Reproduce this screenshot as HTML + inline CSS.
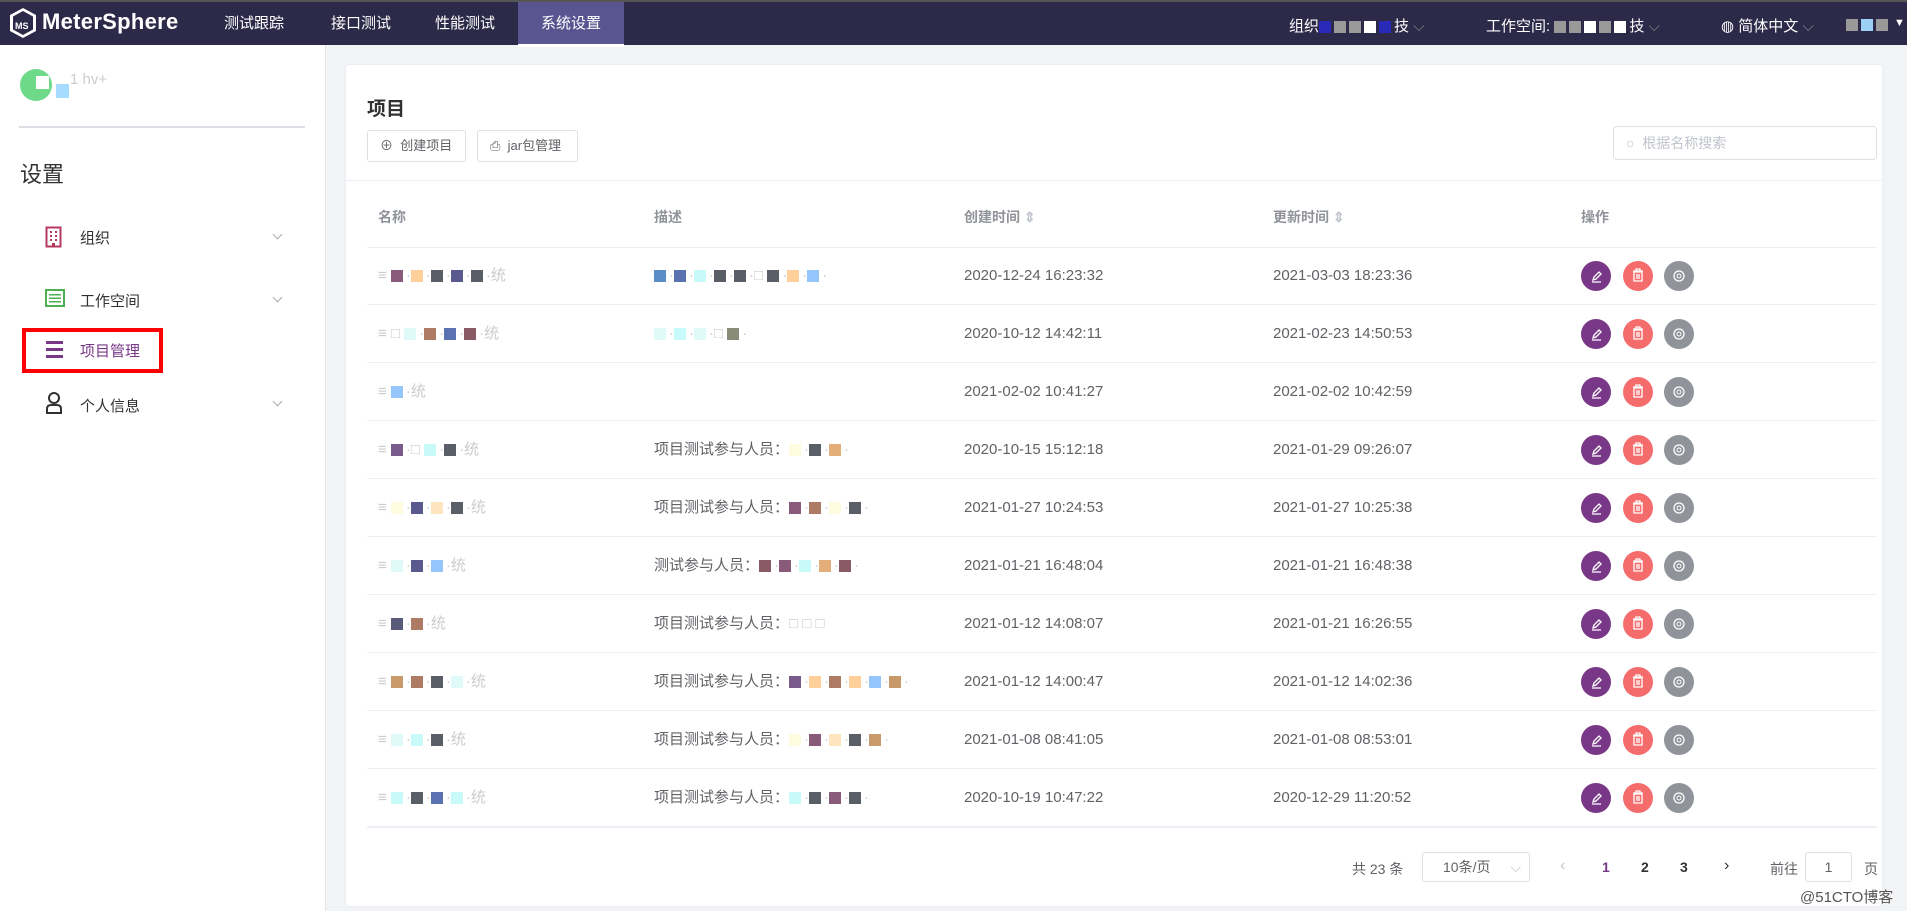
<!DOCTYPE html>
<html><head><meta charset="utf-8"><style>
*{margin:0;padding:0;box-sizing:border-box}
body{width:1907px;height:911px;overflow:hidden;background:#f2f3f5;font-family:"Liberation Sans","Noto Sans CJK SC",sans-serif;color:#606266;position:relative}
.abs{position:absolute}
.hdr{left:0;top:0;width:1907px;height:45px;background:#2c2a48;border-top:2px solid #555}
.tab{top:0;height:45px;width:106px;text-align:center;line-height:43px;color:#fff;font-size:15px}
.tab.on{background:#595591;border-bottom:3px solid #fff}
.side{left:0;top:45px;width:326px;height:866px;background:#fff;border-right:1px solid #e6e6e6}
.card{left:345px;top:64px;width:1538px;height:843px;background:#fff;border:1px solid #ebeef5;border-radius:4px}
.btn{height:32px;border:1px solid #dcdfe6;border-radius:3px;font-size:13px;color:#606266;line-height:30px;padding-left:12px}
.th{top:207px;font-size:14px;color:#909399;font-weight:bold}
.row{left:367px;width:1510px;height:58px;border-bottom:1px solid #ebeef5}
.cell{font-size:15px;color:#606266;line-height:58px;top:0;white-space:nowrap}
.b{display:inline-block;width:12px;height:12px;vertical-align:middle;margin-right:3px}
.g{color:#ccc}
.c{width:30px;height:30px;border-radius:50%;top:14px}
.mi{font-size:15px;color:#303133}
.chev{width:7px;height:7px;border-right:1px solid #aaa;border-bottom:1px solid #aaa;transform:rotate(45deg)}
</style></head><body>
<div class="abs hdr">
 <svg class="abs" style="left:8px;top:4px" width="30" height="34" viewBox="0 0 30 34"><path d="M15 2L28 9V25L15 32L2 25V9Z" fill="#fff"/><path d="M15 5L25 10.5V23.5L15 29L5 23.5V10.5Z" fill="#2c2a48"/><text x="7" y="23" font-size="9" fill="#fff" font-weight="bold" font-family="Liberation Sans">MS</text></svg>
 <div class="abs" style="left:42px;top:7px;color:#fff;font-size:22px;font-weight:bold;letter-spacing:0.3px">MeterSphere</div>
 <div class="abs tab" style="left:201px">测试跟踪</div>
 <div class="abs tab" style="left:308px">接口测试</div>
 <div class="abs tab" style="left:412px">性能测试</div>
 <div class="abs tab on" style="left:518px">系统设置</div>
 <div class="abs" style="left:1289px;top:13px;color:#fff;font-size:15px">组织<span class="b" style="background:#2a2ab8"></span><span class="b" style="background:#999"></span><span class="b" style="background:#999"></span><span class="b" style="background:#fff"></span><span class="b" style="background:#2a2ab8"></span>技 <span style="color:#888">⌵</span></div>
 <div class="abs" style="left:1486px;top:13px;color:#fff;font-size:15px">工作空间: <span class="b" style="background:#999"></span><span class="b" style="background:#999"></span><span class="b" style="background:#fff"></span><span class="b" style="background:#999"></span><span class="b" style="background:#fff"></span>技 <span style="color:#888">⌵</span></div>
 <div class="abs" style="left:1721px;top:13px;color:#fff;font-size:15px">◍ 简体中文 <span style="color:#888">⌵</span></div>
 <div class="abs" style="left:1846px;top:14px"><span class="b" style="background:#999"></span><span class="b" style="background:#9cd0f5"></span><span class="b" style="background:#999"></span></div>
 <div class="abs" style="left:1894px;top:15px;color:#fff;font-size:11px">▼</div>
</div>
<div class="abs side">
 <div class="abs" style="left:20px;top:24px;width:32px;height:32px;border-radius:50%;background:#6fd98a"></div>
 <div class="abs" style="left:36px;top:31px;width:13px;height:13px;background:#fff"></div>
 <div class="abs" style="left:56px;top:39px;width:13px;height:14px;background:#a6dcff"></div>
 <div class="abs g" style="left:70px;top:26px;font-size:15px">1 hv+</div>
 <div class="abs" style="left:19px;top:81px;width:286px;height:2px;background:#dcdfe6"></div>
 <div class="abs" style="left:20px;top:112px;font-size:22px;color:#303133">设置</div>
 <svg class="abs" style="left:45px;top:181px" width="18" height="22"><rect x="1.5" y="1.5" width="14" height="19" fill="none" stroke="#b5385e" stroke-width="2"/><g fill="#b5385e"><rect x="5" y="5" width="2" height="2"/><rect x="10" y="5" width="2" height="2"/><rect x="5" y="9" width="2" height="2"/><rect x="10" y="9" width="2" height="2"/><rect x="5" y="13" width="2" height="2"/><rect x="10" y="13" width="2" height="2"/><rect x="7" y="17" width="3" height="4"/></g></svg>
 <div class="abs mi" style="left:80px;top:182px">组织</div>
 <div class="abs chev" style="left:274px;top:186px"></div>
 <svg class="abs" style="left:45px;top:244px" width="20" height="18"><rect x="1" y="1" width="18" height="16" fill="none" stroke="#4caf50" stroke-width="2"/><g fill="#4caf50"><rect x="4" y="5" width="12" height="1.5"/><rect x="4" y="8.5" width="12" height="1.5"/><rect x="4" y="12" width="12" height="1.5"/></g></svg>
 <div class="abs mi" style="left:80px;top:245px">工作空间</div>
 <div class="abs chev" style="left:274px;top:249px"></div>
 <div class="abs" style="left:22px;top:283px;width:141px;height:45px;border:4px solid #f00"></div>
 <div class="abs" style="left:46px;top:296px;width:17px;height:3px;background:#783887;box-shadow:0 7px 0 #783887,0 14px 0 #783887"></div>
 <div class="abs mi" style="left:80px;top:295px;color:#783887">项目管理</div>
 <svg class="abs" style="left:45px;top:347px" width="18" height="22"><circle cx="9" cy="6" r="5" fill="none" stroke="#303133" stroke-width="2"/><path d="M2 21V17Q2 13 6 13H12Q16 13 16 17V21Z" fill="none" stroke="#303133" stroke-width="2"/></svg>
 <div class="abs mi" style="left:80px;top:350px">个人信息</div>
 <div class="abs chev" style="left:274px;top:353px"></div>
</div>
<div class="abs card"></div>
<div class="abs" style="left:367px;top:94px;font-size:19px;font-weight:bold;color:#303133">项目</div>
<div class="abs btn" style="left:367px;top:130px;width:99px">⊕&nbsp; 创建项目</div>
<div class="abs btn" style="left:477px;top:130px;width:101px">⎙&nbsp; jar包管理</div>
<div class="abs" style="left:1613px;top:126px;width:264px;height:34px;border:1px solid #dcdfe6;border-radius:4px;font-size:14px;color:#c0c4cc;line-height:32px;padding-left:12px">○&nbsp; 根据名称搜索</div>
<div class="abs" style="left:346px;top:180px;width:1536px;height:1px;background:#ebeef5"></div>
<div class="abs th" style="left:378px">名称</div>
<div class="abs th" style="left:654px">描述</div>
<div class="abs th" style="left:964px">创建时间 <span style="color:#c0c4cc">⇕</span></div>
<div class="abs th" style="left:1273px">更新时间 <span style="color:#c0c4cc">⇕</span></div>
<div class="abs th" style="left:1581px">操作</div>
<div class="abs" style="left:367px;top:247px;width:1510px;height:1px;background:#ebeef5"></div>

<div id="rows"></div>
<div class="abs" style="left:367px;top:826px;width:1510px;height:2px;background:#ebeef5"></div>

<div class="abs" style="left:1352px;top:859px;font-size:14px">共 23 条</div>
<div class="abs" style="left:1422px;top:852px;width:108px;height:30px;border:1px solid #dcdfe6;border-radius:3px;font-size:14px;line-height:28px;padding-left:20px">10条/页 <span style="color:#c0c4cc;margin-left:16px">⌵</span></div>
<div class="abs" style="left:1560px;top:857px;font-size:16px;color:#c0c4cc">‹</div>
<div class="abs" style="left:1602px;top:859px;font-size:14px;font-weight:bold;color:#783887">1</div>
<div class="abs" style="left:1641px;top:859px;font-size:14px;font-weight:bold;color:#303133">2</div>
<div class="abs" style="left:1680px;top:859px;font-size:14px;font-weight:bold;color:#303133">3</div>
<div class="abs" style="left:1724px;top:857px;font-size:16px;color:#303133">›</div>
<div class="abs" style="left:1770px;top:859px;font-size:14px">前往</div>
<div class="abs" style="left:1805px;top:852px;width:47px;height:30px;border:1px solid #dcdfe6;border-radius:3px;font-size:14px;line-height:28px;text-align:center">1</div>
<div class="abs" style="left:1864px;top:859px;font-size:14px">页</div>
<div class="abs" style="left:1800px;top:886px;font-size:15px;color:#555;text-shadow:0 0 1px #fff">@51CTO博客</div>

<script>
var rows=[
['#8a5a7a,#ffd09a,#5a5e66,#5a5a8f,#5a5e66','#5b8ec7,#5a72b0,#c8fafa,#5a5e66,#5a5e66,_,#5a5e66,#ffd09a,#94c6fb','','2020-12-24 16:23:32','2021-03-03 18:23:36'],
['_,#e0fafa,#ad7a64,#5a72b0,#8a5a66','#e0fafa,#c8fafa,#e0fafa,_,#8a8c7a','','2020-10-12 14:42:11','2021-02-23 14:50:53'],
['#94c6fb','','','2021-02-02 10:41:27','2021-02-02 10:42:59'],
['#7a5a8a,_,#c8fafa,#5a5e66','#fffbe0,#5a5e66,#e4ae7a','项目测试参与人员：','2020-10-15 15:12:18','2021-01-29 09:26:07'],
['#fffbe0,#5a5a8f,#ffe4c0,#5a5e66','#8a5a7a,#ad7a64,#fffbe0,#5a5e66','项目测试参与人员：','2021-01-27 10:24:53','2021-01-27 10:25:38'],
['#e0fafa,#5a5a8f,#94c6fb','#8a5a66,#8a5a7a,#c8fafa,#e4ae7a,#8a5a66','测试参与人员：','2021-01-21 16:48:04','2021-01-21 16:48:38'],
['#5a5a7a,#ad7a64','_,_,_','项目测试参与人员：','2021-01-12 14:08:07','2021-01-21 16:26:55'],
['#c89a6a,#ad7a64,#5a5e66,#e0fafa','#7a5a8a,#ffd09a,#ad7a64,#ffd09a,#94c6fb,#c89a6a','项目测试参与人员：','2021-01-12 14:00:47','2021-01-12 14:02:36'],
['#e0fafa,#c8fafa,#5a5e66','#fffbe0,#8a5a7a,#ffe4c0,#5a5e66,#c89a6a','项目测试参与人员：','2021-01-08 08:41:05','2021-01-08 08:53:01'],
['#c8fafa,#5a5e66,#5a72b0,#c8fafa','#c8fafa,#5a5e66,#8a5a7a,#5a5e66','项目测试参与人员：','2020-10-19 10:47:22','2020-12-29 11:20:52']];
function blocks(s){if(!s)return '';return s.split(',').map(function(c){return c=='_'?'<span class="g">□ </span>':'<span class="b" style="background:'+c+'"></span><span class="g">·</span>'}).join('');}
var h='';
rows.forEach(function(r,i){
 var t=247+i*58;
 h+='<div class="abs row" style="top:'+t+'px">'+
 '<div class="abs cell" style="left:11px"><span class="g">≡ </span>'+blocks(r[0])+'<span class="g">统</span></div>'+
 '<div class="abs cell" style="left:287px">'+r[2]+blocks(r[1])+'</div>'+
 '<div class="abs cell" style="left:597px">'+r[3]+'</div>'+
 '<div class="abs cell" style="left:906px">'+r[4]+'</div>'+
 '<div class="abs c" style="left:1214px;background:#783887"><svg width="30" height="30"><path d="M12 19l1-3 5-5 2 2-5 5z M11 21h9" stroke="#fff" stroke-width="1.3" fill="none"/></svg></div>'+
 '<div class="abs c" style="left:1256px;background:#f56c6c"><svg width="30" height="30"><path d="M10 10h10M13 10v-2h4v2M11 11h8v9h-8z M14 13v5M16 13v5" stroke="#fff" stroke-width="1.3" fill="none"/></svg></div>'+
 '<div class="abs c" style="left:1297px;background:#909399"><svg width="30" height="30"><circle cx="15" cy="15" r="5" stroke="#fff" stroke-width="1.3" fill="none"/><circle cx="15" cy="15" r="2" stroke="#fff" stroke-width="1" fill="none"/></svg></div>'+
 '</div>';
});
document.getElementById('rows').innerHTML=h;
</script>
</body></html>
